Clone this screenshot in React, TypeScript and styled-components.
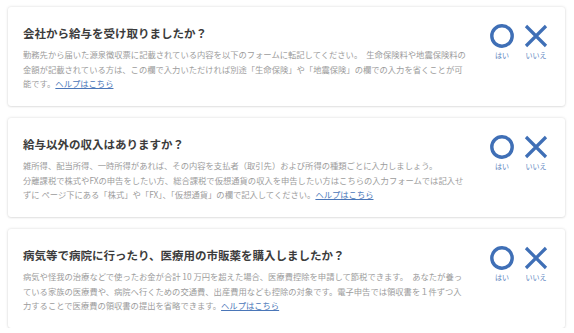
import React from "react";
import styled, { createGlobalStyle } from "styled-components";

const Global = createGlobalStyle`
  html, body { margin: 0; padding: 0; background: #ffffff; }
  body { font-family: "Noto Sans CJK JP", "Noto Sans", sans-serif; }
`;

const Page = styled.div`
  display: flex;
  flex-direction: column;
  gap: 12px;
  padding: 7px 9px 0 8px;
`;

const Card = styled.section`
  display: flex;
  align-items: flex-start;
  height: 99px;
  box-sizing: border-box;
  padding: 18px 12px 0 15px;
  background: #fff;
  border-radius: 3px;
  box-shadow: 0 0 3px rgba(0, 0, 0, 0.16), 0 1px 2px rgba(0, 0, 0, 0.06);
`;

const TextCol = styled.div`
  flex: 1;
  min-width: 0;
`;

const Title = styled.h2`
  margin: 0 0 6px;
  font-size: 11.5px;
  line-height: 16px;
  font-weight: 700;
  color: #3c3c3c;
  white-space: nowrap;
`;

const Body = styled.p`
  margin: 0;
  font-size: 8.3px;
  line-height: 14.5px;
  color: #9c9c9c;
  white-space: nowrap;
`;

const Help = styled.a`
  color: #4a76b8;
  text-decoration: underline;
  cursor: pointer;
`;

const Options = styled.div`
  display: flex;
  margin-top: -1px;
`;

const Option = styled.button`
  width: 34px;
  padding: 0;
  border: 0;
  background: none;
  display: flex;
  flex-direction: column;
  align-items: center;
  gap: 2px;
  cursor: pointer;
  font-family: inherit;
`;

const Label = styled.span`
  font-size: 7px;
  line-height: 10px;
  font-weight: 400;
  color: #5a83c0;
`;

const Yes = () => (
  <svg width="24" height="24" viewBox="0 0 24 24">
    <circle cx="12" cy="12" r="10.2" fill="none" stroke="#3f6fb6" strokeWidth="3.4" />
  </svg>
);

const No = () => (
  <svg width="24" height="24" viewBox="0 0 24 24">
    <path d="M2 2 L22 22 M22 2 L2 22" stroke="#3f6fb6" strokeWidth="3.2" strokeLinecap="butt" />
  </svg>
);

type Q = { title: string; lines: string[]; last: string };

const questions: Q[] = [
  {
    title: "会社から給与を受け取りましたか？",
    lines: [
      "勤務先から届いた源泉徴収票に記載されている内容を以下のフォームに転記してください。\u3000生命保険料や地震保険料の",
      "金額が記載されている方は、この欄で入力いただければ別途「生命保険」や「地震保険」の欄での入力を省くことが可",
    ],
    last: "能です。",
  },
  {
    title: "給与以外の収入はありますか？",
    lines: [
      "雑所得、配当所得、一時所得があれば、その内容を支払者（取引先）および所得の種類ごとに入力しましょう。",
      "分離課税で株式やFXの申告をしたい方、総合課税で仮想通貨の収入を申告したい方はこちらの入力フォームでは記入せ",
    ],
    last: "ずに ページ下にある「株式」や「FX」、「仮想通貨」の欄で記入してください。",
  },
  {
    title: "病気等で病院に行ったり、医療用の市販薬を購入しましたか？",
    lines: [
      "病気や怪我の治療などで使ったお金が合計 10 万円を超えた場合、医療費控除を申請して節税できます。\u3000あなたが養っ",
      "ている家族の医療費や、病院へ行くための交通費、出産費用なども控除の対象です。電子申告では領収書を１件ずつ入",
    ],
    last: "力することで医療費の領収書の提出を省略できます。",
  },
];

export default function App() {
  return (
    <>
      <Global />
      <Page>
        {questions.map((q) => (
          <Card key={q.title}>
            <TextCol>
              <Title>{q.title}</Title>
              <Body>
                {q.lines.map((l) => (
                  <React.Fragment key={l}>
                    {l}
                    <br />
                  </React.Fragment>
                ))}
                {q.last}
                <Help>ヘルプはこちら</Help>
              </Body>
            </TextCol>
            <Options>
              <Option>
                <Yes />
                <Label>はい</Label>
              </Option>
              <Option>
                <No />
                <Label>いいえ</Label>
              </Option>
            </Options>
          </Card>
        ))}
      </Page>
    </>
  );
}
